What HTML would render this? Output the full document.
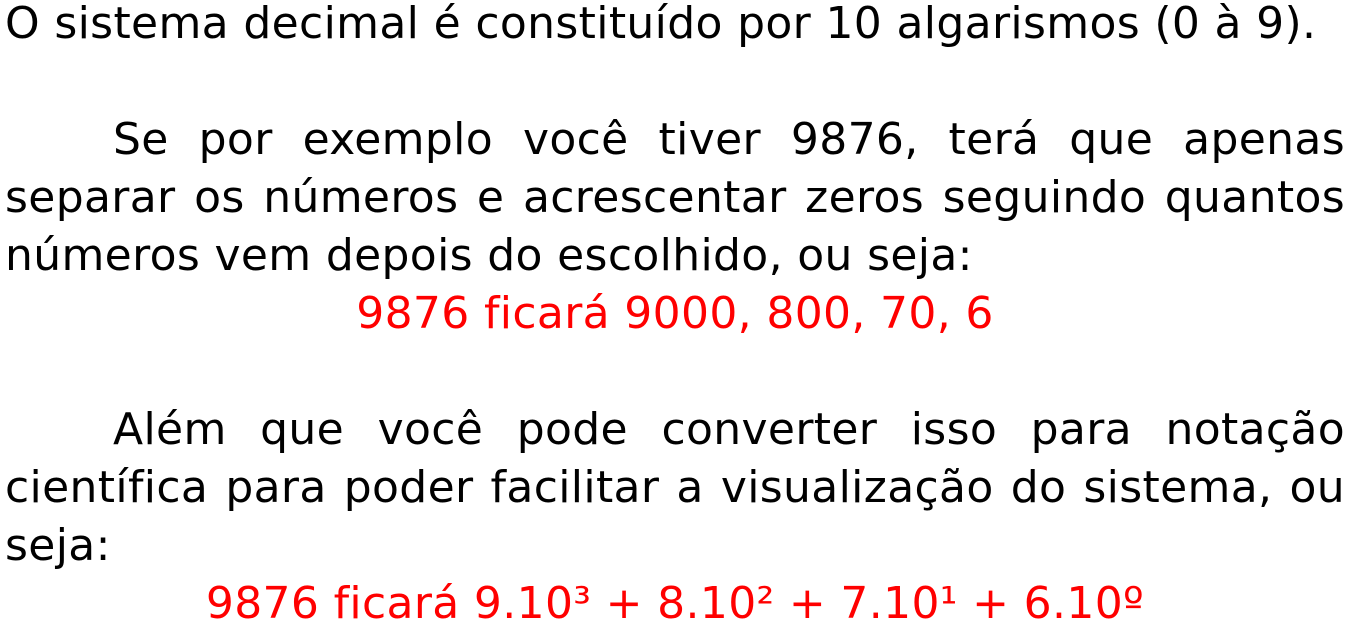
<!DOCTYPE html>
<html><head><meta charset="utf-8"><style>
html,body{margin:0;padding:0;background:#fff;width:1350px;height:629px;overflow:hidden}
body{font-family:"DejaVu Sans","Liberation Sans",sans-serif;font-size:44px;line-height:58px;color:#000;letter-spacing:0.35px;font-variant-ligatures:none}
.w{position:absolute;left:5px;top:-5px;width:1340px}
div.l{white-space:nowrap;text-align:justify;text-align-last:justify}
div.e{white-space:nowrap}
.i{padding-left:108px}
.c{text-align:center;color:#ff0000;white-space:nowrap}
.b{height:58px}
</style></head><body><div class="w">
<div class="e">O sistema decimal é constituído por 10 algarismos (0 à 9).</div>
<div class="b"></div>
<div class="l i">Se por exemplo você tiver 9876, terá que apenas</div>
<div class="l">separar os números e acrescentar zeros seguindo quantos</div>
<div class="e">números vem depois do escolhido, ou seja:</div>
<div class="c">9876 ficará 9000, 800, 70, 6</div>
<div class="b"></div>
<div class="l i">Além que você pode converter isso para notação</div>
<div class="l">científica para poder facilitar a visualização do sistema, ou</div>
<div class="e">seja:</div>
<div class="c">9876 ficará 9.10³ + 8.10² + 7.10¹ + 6.10º</div>
</div></body></html>
